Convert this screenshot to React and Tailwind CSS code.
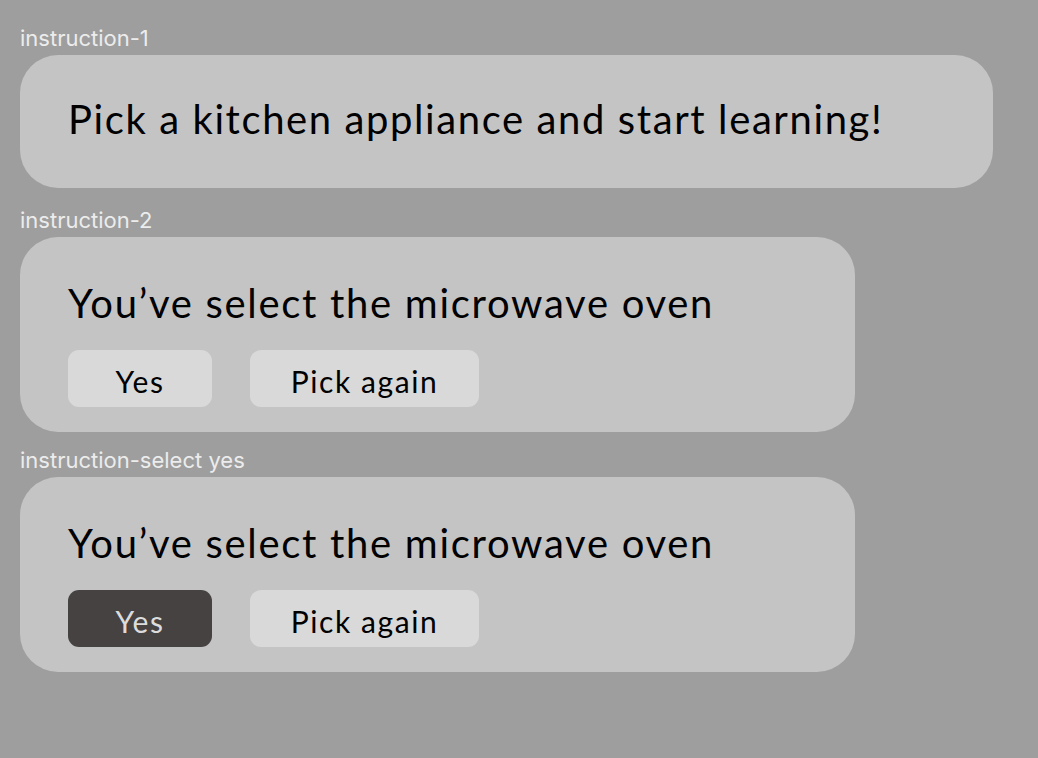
export default function App() {
  return (
    <div className="min-h-screen w-full bg-[#9e9e9e] px-5 pt-[26px]" style={{ fontFamily: 'Lato, "Noto Sans", sans-serif' }}>
      <FrameLabel>instruction-1</FrameLabel>
      <div className="w-[973px] h-[133px] rounded-[38px] bg-[#c4c4c4] pl-12 pt-[40px]">
        <p className="text-[40px] leading-[48px] tracking-[1.6px] text-black">Pick a kitchen appliance and start learning!</p>
      </div>

      <div className="mt-[20px]">
        <FrameLabel>instruction-2</FrameLabel>
        <ConfirmCard selected={false} />
      </div>

      <div className="mt-[16px]">
        <FrameLabel>instruction-select yes</FrameLabel>
        <ConfirmCard selected={true} />
      </div>
    </div>
  )
}

function FrameLabel({ children }) {
  return (
    <div
      className="text-[22px] leading-[24px] mb-[5px] text-[#ececec]"
      style={{ fontFamily: 'Inter, "Noto Sans", sans-serif' }}
    >
      {children}
    </div>
  )
}

function ConfirmCard({ selected }) {
  const base = 'h-[57px] rounded-[11px] text-[30px] tracking-[1.6px] pt-[6px]'
  return (
    <div className="w-[835px] h-[195px] rounded-[38px] bg-[#c4c4c4] pl-12 pt-[42px]">
      <p className="text-[40px] leading-[48px] tracking-[1.7px] text-black">You’ve select the microwave oven</p>
      <div className="flex gap-[38px] mt-[23px]">
        <button
          className={
            selected
              ? base + ' w-[144px] bg-[#464242] text-[#dcdcdc]'
              : base + ' w-[144px] bg-[#d9d9d9] text-black'
          }
        >
          Yes
        </button>
        <button className={base + ' w-[229px] bg-[#d9d9d9] text-black'}>Pick again</button>
      </div>
    </div>
  )
}
